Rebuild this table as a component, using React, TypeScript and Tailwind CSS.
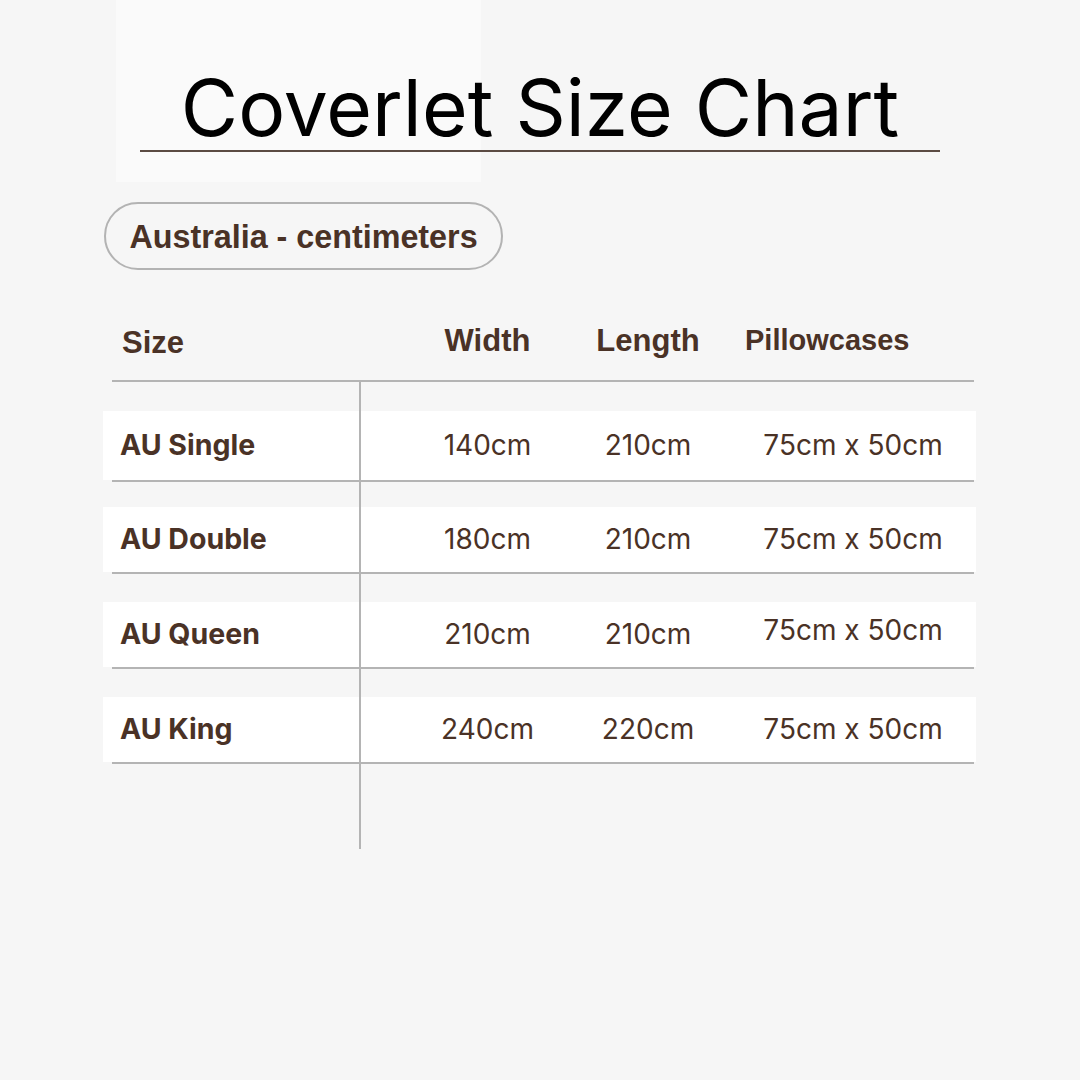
import React from 'react';

interface SizeRow {
  label: string;
  width: string;
  length: string;
  pillow: string;
  gap: string;
  height: string;
  pillowNudge?: string;
}

const rows: SizeRow[] = [
  { label: 'AU Single', width: '140cm', length: '210cm', pillow: '75cm x 50cm', gap: 'mt-[29px]', height: 'h-[69px]' },
  { label: 'AU Double', width: '180cm', length: '210cm', pillow: '75cm x 50cm', gap: 'mt-[25px]', height: 'h-[65px]' },
  { label: 'AU Queen', width: '210cm', length: '210cm', pillow: '75cm x 50cm', gap: 'mt-[28px]', height: 'h-[65px]', pillowNudge: 'mb-[8px]' },
  { label: 'AU King', width: '240cm', length: '220cm', pillow: '75cm x 50cm', gap: 'mt-[28px]', height: 'h-[65px]' },
];

const arial = "font-['Liberation_Sans',Arial,sans-serif]";
const inter = "font-['Inter',sans-serif]";

const App: React.FC = () => {
  return (
    <div className="relative w-[1080px] h-[1080px] overflow-hidden bg-[#f6f6f6] text-[#4a3226]">
      {/* faint backdrop behind the title */}
      <div className="absolute left-[116px] top-0 w-[365px] h-[182px] bg-[#fafafa]" />

      <div className="relative">
        <h1 className={`${inter} pt-[69px] text-center text-[78.5px] leading-none font-normal text-black`}>
          Coverlet Size Chart
        </h1>
        <div className="mt-[2px] ml-[140px] w-[800px] h-[2px] bg-[#5b4b43]" />

        <div className="mt-[50px] ml-[104px] w-[399px] h-[68px] rounded-full border-2 border-[#b3b3b3] flex items-center justify-center">
          <span className={`${arial} pt-[4px] text-[32.3px] font-bold leading-none`}>Australia - centimeters</span>
        </div>

        <div className={`${arial} mt-[55px] ml-[103px] flex font-bold leading-none`}>
          <div className="w-[297px] pl-[19px] pt-[2px] text-[31px]">Size</div>
          <div className="w-[175px] text-center text-[31px]">Width</div>
          <div className="w-[146px] text-center text-[31px]">Length</div>
          <div className="pl-[24px] pt-[1px] text-[29px]">Pillowcases</div>
        </div>

        <div className="relative mt-[22px]">
          <div className="ml-[112px] w-[862px] h-[2px] bg-[#b4b4b4]" />
          {rows.map((row) => (
            <div key={row.label} className={row.gap}>
              <div className={`${row.height} ml-[103px] w-[873px] bg-white flex items-center ${inter} text-[28px]`}>
                <div className="w-[297px] pl-[17px] font-bold text-[28.5px]">{row.label}</div>
                <div className="w-[175px] text-center">{row.width}</div>
                <div className="w-[146px] text-center">{row.length}</div>
                <div className={`w-[255px] pl-[9px] text-center ${row.pillowNudge ?? ''}`}>{row.pillow}</div>
              </div>
              <div className="ml-[112px] w-[862px] h-[2px] bg-[#b4b4b4]" />
            </div>
          ))}
          {/* column divider */}
          <div className="absolute left-[359px] top-[1px] w-[2px] h-[468px] bg-[#b4b4b4]" />
        </div>
      </div>
    </div>
  );
};

export default App;
